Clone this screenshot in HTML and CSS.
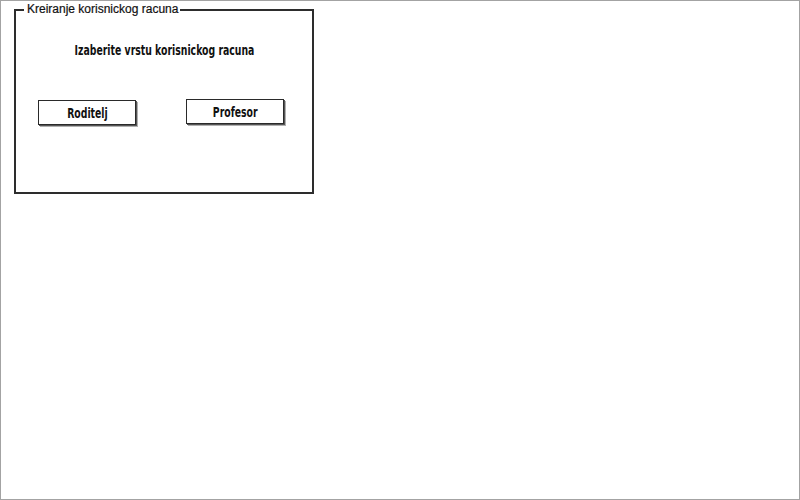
FILE: index.html
```html
<!DOCTYPE html>
<html>
<head>
<meta charset="utf-8">
<link rel="stylesheet" href="styles.css">
</head>
<body>
<div class="frame">
  <fieldset class="group">
    <legend class="group-title">Kreiranje korisnickog racuna</legend>
    <h1 class="heading"><span class="narrow">Izaberite vrstu korisnickog racuna</span></h1>
    <div class="actions">
      <button class="btn btn-first"><span class="narrow">Roditelj</span></button>
      <button class="btn"><span class="narrow">Profesor</span></button>
    </div>
  </fieldset>
</div>
</body>
</html>
```
FILE: styles.css
```css
html, body {
  margin: 0;
  padding: 0;
  background: #fff;
}
.frame {
  box-sizing: border-box;
  width: 800px;
  height: 500px;
  border: 1px solid #a3a3a3;
  padding: 2px 0 0 13px;
}
.group {
  box-sizing: border-box;
  width: 300px;
  height: 191px;
  margin: 0;
  padding: 0;
  border: 2px solid #2d2d2d;
  min-width: 0;
}
.group-title {
  margin-left: 8px;
  padding: 0 2px 0 3px;
  font-family: "Liberation Sans", Arial, sans-serif;
  font-size: 12px;
  line-height: 13px;
  color: #111;
  -webkit-text-stroke: 0.2px #111;
}
.narrow {
  display: inline-block;
  transform: scaleX(0.74);
  transform-origin: center;
  white-space: nowrap;
}
.heading {
  margin: 25px 0 0 0;
  text-align: center;
  font-family: "DejaVu Sans Condensed", "DejaVu Sans", sans-serif;
  font-weight: bold;
  font-size: 14px;
  line-height: 18px;
  color: #111;
}
.actions {
  display: flex;
  gap: 50px;
  padding: 0 0 0 22px;
  margin-top: 40px;
  align-items: flex-start;
}
.btn {
  box-sizing: border-box;
  width: 98px;
  height: 25px;
  padding: 0;
  background: #fff;
  border: 1px solid #2a2a2a;
  box-shadow: 1px 1px 0 #555, 2px 2px 0 #b0b0b0;
  font-family: "DejaVu Sans Condensed", "DejaVu Sans", sans-serif;
  font-weight: bold;
  font-size: 14px;
  color: #111;
}
.btn-first {
  margin-top: 1px;
}
```
